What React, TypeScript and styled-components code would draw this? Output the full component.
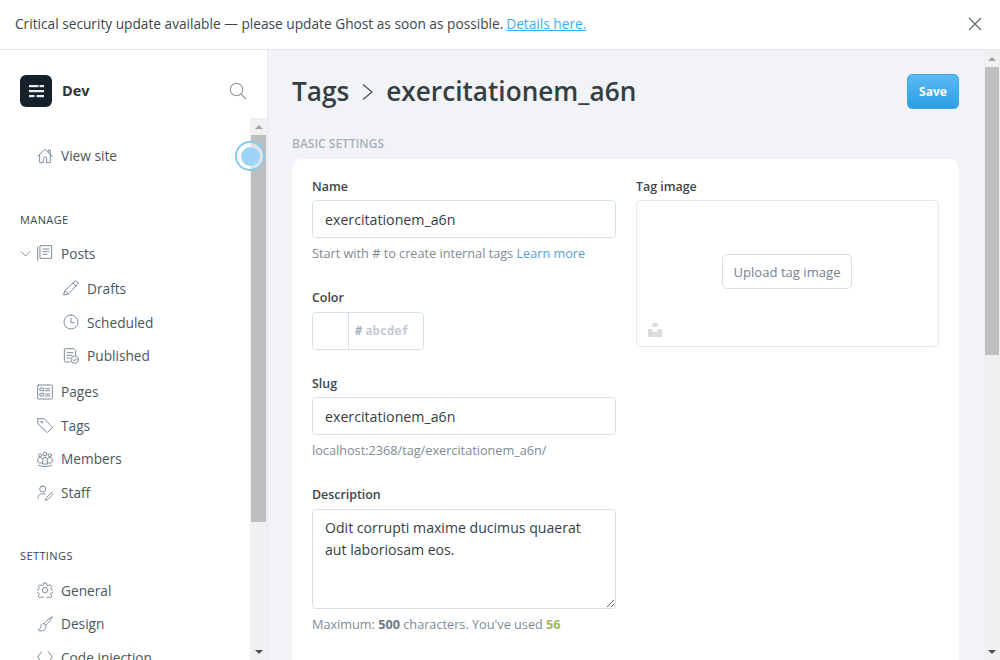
import React from "react";
import styled, { createGlobalStyle } from "styled-components";

const GlobalStyle = createGlobalStyle`
  html, body {
    margin: 0;
    height: 100%;
    overflow: hidden;
  }
  body {
    font-family: "Open Sans", "Noto Sans", sans-serif;
    font-size: 13.7px;
    color: #343f44;
    background: #fff;
  }
  * {
    box-sizing: border-box;
  }
`;

const Page = styled.div`
  display: flex;
  flex-direction: column;
  height: 100vh;
`;

const Banner = styled.div`
  flex: 0 0 50px;
  display: flex;
  align-items: center;
  justify-content: space-between;
  padding: 0 18px 2px 15px;
  border-bottom: 1px solid #e3e5e7;
  background: #fff;
  color: #3b464c;
  a {
    color: #3eb0ef;
    margin-left: 3px;
    text-decoration: underline;
  }
`;

const CloseButton = styled.button`
  display: flex;
  padding: 0;
  border: 0;
  background: none;
  color: #5d6a72;
`;

const Body = styled.div`
  flex: 1;
  min-height: 0;
  display: flex;
`;

const Sidebar = styled.aside`
  position: relative;
  flex: 0 0 268px;
  display: flex;
  flex-direction: column;
  min-height: 0;
  border-right: 1px solid #e9ebee;
  background: #fff;
`;

const SidebarHead = styled.div`
  flex: 0 0 68px;
  display: flex;
  align-items: center;
  padding: 13px 20px 0 20px;
`;

const Logo = styled.div`
  width: 32px;
  height: 32px;
  display: flex;
  align-items: center;
  justify-content: center;
  border-radius: 6px;
  background: #15212a;
`;

const SiteName = styled.span`
  flex: 1;
  margin-left: 10px;
  font-size: 14.5px;
  font-weight: 700;
  color: #2b363b;
`;

const SearchIcon = styled.span`
  display: flex;
  color: #8b979e;
`;

const SidebarBody = styled.div`
  flex: 1;
  min-height: 0;
  display: flex;
`;

const Nav = styled.nav`
  flex: 1;
  min-width: 0;
  overflow: hidden;
  padding: 21px 0 0 20px;
`;

const NavSection = styled.div<{ $top?: number }>`
  margin-top: ${(p) => p.$top ?? 0}px;
`;

const SectionTitle = styled.div`
  height: 16px;
  margin-bottom: 9px;
  font-size: 11px;
  line-height: 16px;
  font-weight: 500;
  letter-spacing: 0.4px;
  color: #3b464c;
`;

const NavRow = styled.div<{ $sub?: boolean }>`
  position: relative;
  height: 33.6px;
  display: flex;
  align-items: center;
  gap: 8px;
  padding-left: ${(p) => (p.$sub ? 43 : 17)}px;
  color: #4a575f;
  svg {
    flex: none;
    color: #7d8d98;
  }
`;

const SubList = styled.div`
  padding: 1.5px 0 2.5px;
`;

const Caret = styled.span`
  position: absolute;
  left: 0;
  top: 11px;
  display: flex;
  color: #a3adb4;
`;

const ScrollBar = styled.div<{ $width: number }>`
  flex: 0 0 ${(p) => p.$width}px;
  display: flex;
  flex-direction: column;
  background: #f0f0f0;
`;

const ScrollArrow = styled.div<{ $down?: boolean }>`
  flex: 0 0 17px;
  display: flex;
  align-items: center;
  justify-content: center;
  &::before {
    content: "";
    border-left: 4px solid transparent;
    border-right: 4px solid transparent;
    ${(p) => (p.$down ? "border-top: 4px solid #505050;" : "border-bottom: 4px solid #a3a3a3;")}
  }
`;

const ScrollTrack = styled.div`
  flex: 1;
  min-height: 0;
  padding: 0 1px;
`;

const ScrollThumb = styled.div<{ $height: number }>`
  height: ${(p) => p.$height}px;
  background: #bebebe;
`;

const Pulse = styled.div`
  position: absolute;
  left: 235px;
  top: 91px;
  width: 30px;
  height: 30px;
  display: flex;
  align-items: center;
  justify-content: center;
  border: 2px solid #84cbf5;
  border-radius: 50%;
  background: rgba(255, 255, 255, 0.55);
  &::after {
    content: "";
    width: 19px;
    height: 19px;
    border-radius: 50%;
    background: #9dd5f8;
  }
`;

const Main = styled.main`
  flex: 1;
  min-width: 0;
  display: flex;
  background: #f1f3f7;
`;

const Content = styled.div`
  flex: 1;
  min-width: 0;
  overflow: hidden;
  padding: 24px 25px 0 24px;
`;

const TitleBar = styled.div`
  height: 35px;
  display: flex;
  align-items: center;
  justify-content: space-between;
`;

const Title = styled.h1`
  display: flex;
  align-items: center;
  margin: 0;
  padding-bottom: 2px;
  font-size: 26.2px;
  font-weight: 600;
  color: #343f44;
  svg {
    margin: 3px 12px 0 12px;
    color: #3b464c;
  }
`;

const SaveButton = styled.button`
  width: 52px;
  height: 35px;
  padding: 0;
  border: 1px solid #3ea9ea;
  border-radius: 5px;
  background: linear-gradient(#5bbaf1, #2a9fe6);
  color: #fff;
  font: 700 12px "Open Sans", sans-serif;
`;

const SectionLabel = styled.div`
  margin-top: 27px;
  height: 16px;
  font-size: 12px;
  line-height: 16px;
  font-weight: 600;
  color: #a6b2ba;
`;

const Card = styled.section`
  margin-top: 7px;
  height: 600px;
  display: grid;
  grid-template-columns: 304px 303px;
  column-gap: 20px;
  align-items: start;
  padding: 20px;
  border-radius: 10px;
  background: #fff;
`;

const Column = styled.div`
  display: flex;
  flex-direction: column;
`;

const Field = styled.div<{ $top?: number }>`
  margin-top: ${(p) => p.$top ?? 0}px;
`;

const Label = styled.label`
  display: block;
  height: 16px;
  margin-bottom: 5px;
  font-size: 12.4px;
  line-height: 16px;
  font-weight: 600;
  color: #3b464c;
`;

const TextInput = styled.input`
  display: block;
  width: 100%;
  height: 38px;
  padding: 0 12px;
  border: 1px solid #d5e0e9;
  border-radius: 4px;
  outline: none;
  background: #fff;
  color: #343f44;
  font: 14.2px "Open Sans", sans-serif;
`;

const TextArea = styled.textarea`
  display: block;
  width: 100%;
  height: 100px;
  margin-top: 6px;
  padding: 7px 12px;
  border: 1px solid #d5e0e9;
  border-radius: 4px;
  outline: none;
  background: #fff;
  color: #343f44;
  font: 14.1px/22px "Open Sans", sans-serif;
`;

const Hint = styled.p`
  height: 16px;
  margin: 7px 0 0;
  font-size: 12.7px;
  line-height: 16px;
  color: #7d8b94;
  a {
    color: #5a9fd0;
    text-decoration: none;
  }
  b {
    font-weight: 700;
    color: #6a7a85;
  }
`;

const UsedCount = styled.b`
  && {
    color: #9fbb58;
  }
`;

const ColorBox = styled.div`
  width: 112px;
  height: 38px;
  margin-top: 6px;
  display: flex;
  border: 1px solid #d5e0e9;
  border-radius: 4px;
`;

const Swatch = styled.div`
  flex: 0 0 36px;
  border-right: 1px solid #d5e0e9;
`;

const ColorValue = styled.div`
  flex: 1;
  display: flex;
  align-items: center;
  gap: 3px;
  padding-left: 6px;
  font: 700 12px "DejaVu Sans Mono", monospace;
  color: #c2cbd1;
  span {
    color: #a6b0b7;
  }
`;

const ImageBox = styled.div`
  position: relative;
  height: 147px;
  display: flex;
  align-items: center;
  justify-content: center;
  padding: 0 1px 4px 0;
  border: 1px solid #e3ebf1;
  border-radius: 4px;
`;

const UploadButton = styled.button`
  width: 130px;
  height: 35px;
  padding: 0;
  border: 1px solid #d5e0e6;
  border-radius: 5px;
  background: #fff;
  color: #74838d;
  font: 13.1px "Open Sans", sans-serif;
`;

const UnsplashMark = styled.span`
  position: absolute;
  left: 11px;
  bottom: 9px;
  display: flex;
  color: #dcdcdc;
`;

type IconProps = { d: string; extra?: React.ReactNode };

const Icon = ({ d, extra }: IconProps) => (
  <svg width="16" height="16" viewBox="0 0 24 24" fill="none" stroke="currentColor" strokeWidth="1.5" strokeLinecap="round" strokeLinejoin="round">
    <path d={d} />
    {extra}
  </svg>
);

const icons: Record<string, React.ReactNode> = {
  home: <Icon d="M1 12.500 12 2l11 10.500M4 10v12h5.500v-6a2.500 2.500 0 0 1 5 0v6H20V10M17 6V3h3v6" />,
  posts: <Icon d="M1 3v20M5 1h17v19H5zM9 6h9M9 10h9M9 14h6" />,
  drafts: <Icon d="M3 16 17 2.500a3 3 0 0 1 4.500 4.500L8 21l-6.500 1.500zM3 16l5 5M15 4.500l4.500 4.500" />,
  scheduled: <Icon d="M12 1.500a10.500 10.500 0 1 0 0 21 10.500 10.500 0 0 0 0-21zM12 6v7h5" />,
  published: (
    <Icon
      d="M10 21H4a2 2 0 0 1-2-2V3a2 2 0 0 1 2-2h12l3 3v7M6 7h9M6 11h7M6 15h4"
      extra={
        <>
          <circle cx="17.500" cy="17.500" r="5.500" />
          <path d="m15 17.500 2 2 3-3.500" />
        </>
      }
    />
  ),
  pages: <Icon d="M2 1.500h20a1 1 0 0 1 1 1v19a1 1 0 0 1-1 1H2a1 1 0 0 1-1-1v-19a1 1 0 0 1 1-1zM5 6h5v4H5zM5 14h5v4H5zM13 7h6M13 10h6M13 15h6M13 18h6" />,
  tags: (
    <Icon
      d="M1.500 2.500h9l12 12a1.500 1.500 0 0 1 0 2l-6 6a1.500 1.500 0 0 1-2 0L2 11z"
      extra={<circle cx="7" cy="7.500" r="1.200" />}
    />
  ),
  members: (
    <Icon
      d="M2 21.500c6 2.500 14 2.500 20 0"
      extra={
        <>
          <circle cx="12" cy="4.500" r="2.800" />
          <circle cx="4.800" cy="6.500" r="2.300" />
          <circle cx="19.200" cy="6.500" r="2.300" />
          <path d="M8.500 19v-6a3.500 3.500 0 0 1 7 0v6zM8.500 12c-1-1.500-2.500-2.300-4-2.300-2 0-3.500 1.500-3.500 3.500v3L3.500 18h5M15.500 12c1-1.500 2.500-2.300 4-2.300 2 0 3.500 1.500 3.500 3.500v3L20.500 18h-5" />
        </>
      }
    />
  ),
  staff: <Icon d="M8.500 1.500a4.500 4.500 0 1 0 0 9 4.500 4.500 0 0 0 0-9zM1.500 20c0-5 3-7 7-7 1.500 0 2.800.300 4 1M13 22.500l1-3.500 7-7a1.800 1.800 0 0 1 2.500 2.500l-7 7z" />,
  general: (
    <Icon
      d="M10 1.500h4l.7 3.200 2 .9 2.800-1.700 2.800 2.800-1.700 2.800.9 2 3.200.7v3.600l-3.200.7-.9 2 1.700 2.800-2.800 2.800-2.800-1.700-2 .9-.7 2.700h-4l-.7-2.700-2-.9-2.800 1.700-2.800-2.800 1.700-2.800-.9-2-3.200-.7v-3.600l3.200-.7.9-2-1.700-2.800 2.800-2.800 2.800 1.700 2-.9z"
      extra={<circle cx="12" cy="12.300" r="4" />}
    />
  ),
  design: <Icon d="M22.500 1.500c-3 1-9 6-12 10l2.500 2.500c4-3 8.500-9 9.500-12.500zM10 11.500c-3 0-4.500 2-4.500 4.500 0 2.500-2 4-4 5 2.500 2 8 2 10.500-.5 1.500-1.500 2-4 1-6.500" />,
  code: <Icon d="M7 4 1 12l6 8M17 4l6 8-6 8" />,
};

function App() {
  return (
    <Page>
      <GlobalStyle />
      <Banner>
        <span>
          Critical security update available — please update Ghost as soon as possible.
          <a href="#details">Details here.</a>
        </span>
        <CloseButton aria-label="Close">
          <svg width="14" height="14" viewBox="0 0 14 14" fill="none" stroke="currentColor" strokeWidth="1.2">
            <path d="M1 1l12 12M13 1 1 13" />
          </svg>
        </CloseButton>
      </Banner>
      <Body>
        <Sidebar>
          <SidebarHead>
            <Logo>
              <svg width="15" height="14" viewBox="0 0 15 14" fill="#e8eaec">
                <rect x="0" y="1" width="9.500" height="2.200" />
                <rect x="10.500" y="1" width="4.500" height="2.200" />
                <rect x="0" y="6" width="15" height="2.200" />
                <rect x="0" y="11" width="5.500" height="2.200" />
                <rect x="7.500" y="11" width="7.500" height="2.200" />
              </svg>
            </Logo>
            <SiteName>Dev</SiteName>
            <SearchIcon>
              <svg width="18" height="18" viewBox="0 0 18 18" fill="none" stroke="currentColor" strokeWidth="1.100">
                <circle cx="7.500" cy="7.500" r="6.200" />
                <path d="m12 12 5 5" />
              </svg>
            </SearchIcon>
          </SidebarHead>
          <SidebarBody>
            <Nav>
              <NavRow>
                {icons.home}
                View site
              </NavRow>
              <NavSection $top={39}>
                <SectionTitle>MANAGE</SectionTitle>
                <NavRow>
                  <Caret>
                    <svg width="11" height="11" viewBox="0 0 11 11" fill="none" stroke="currentColor" strokeWidth="1">
                      <path d="m1 3.500 4.500 4.500L10 3.500" />
                    </svg>
                  </Caret>
                  {icons.posts}
                  Posts
                </NavRow>
                <SubList>
                  <NavRow $sub>{icons.drafts}Drafts</NavRow>
                  <NavRow $sub>{icons.scheduled}Scheduled</NavRow>
                  <NavRow $sub>{icons.published}Published</NavRow>
                </SubList>
                <NavRow>{icons.pages}Pages</NavRow>
                <NavRow>{icons.tags}Tags</NavRow>
                <NavRow>{icons.members}Members</NavRow>
                <NavRow>{icons.staff}Staff</NavRow>
              </NavSection>
              <NavSection $top={39}>
                <SectionTitle>SETTINGS</SectionTitle>
                <NavRow>{icons.general}General</NavRow>
                <NavRow>{icons.design}Design</NavRow>
                <NavRow>{icons.code}Code injection</NavRow>
              </NavSection>
            </Nav>
            <ScrollBar $width={17}>
              <ScrollArrow />
              <ScrollTrack>
                <ScrollThumb $height={387} />
              </ScrollTrack>
              <ScrollArrow $down />
            </ScrollBar>
          </SidebarBody>
          <Pulse />
        </Sidebar>
        <Main>
          <Content>
            <TitleBar>
              <Title>
                Tags
                <svg width="13" height="18" viewBox="0 0 13 18" fill="none" stroke="currentColor" strokeWidth="1.100">
                  <path d="m2 1.500 9 7.500-9 7.500" />
                </svg>
                exercitationem_a6n
              </Title>
              <SaveButton>Save</SaveButton>
            </TitleBar>
            <SectionLabel>BASIC SETTINGS</SectionLabel>
            <Card>
              <Column>
                <Field>
                  <Label>Name</Label>
                  <TextInput readOnly value="exercitationem_a6n" />
                  <Hint>
                    Start with # to create internal tags <a href="#learn">Learn more</a>
                  </Hint>
                </Field>
                <Field $top={29}>
                  <Label>Color</Label>
                  <ColorBox>
                    <Swatch />
                    <ColorValue>
                      <span>#</span>abcdef
                    </ColorValue>
                  </ColorBox>
                </Field>
                <Field $top={26}>
                  <Label>Slug</Label>
                  <TextInput readOnly value="exercitationem_a6n" />
                  <Hint>localhost:2368/tag/exercitationem_a6n/</Hint>
                </Field>
                <Field $top={29}>
                  <Label>Description</Label>
                  <TextArea readOnly value="Odit corrupti maxime ducimus quaerat aut laboriosam eos." />
                  <Hint>
                    Maximum: <b>500</b> characters. You've used <UsedCount>56</UsedCount>
                  </Hint>
                </Field>
              </Column>
              <Column>
                <Field>
                  <Label>Tag image</Label>
                  <ImageBox>
                    <UploadButton>Upload tag image</UploadButton>
                    <UnsplashMark>
                      <svg width="14" height="14" viewBox="0 0 14 14" fill="currentColor">
                        <path d="M4.500 0h5v4h-5zM0 6h4.500v3h5V6H14v8H0z" />
                      </svg>
                    </UnsplashMark>
                  </ImageBox>
                </Field>
              </Column>
            </Card>
          </Content>
          <ScrollBar $width={16}>
            <ScrollArrow />
            <ScrollTrack>
              <ScrollThumb $height={288} />
            </ScrollTrack>
            <ScrollArrow $down />
          </ScrollBar>
        </Main>
      </Body>
    </Page>
  );
}

export default App;
